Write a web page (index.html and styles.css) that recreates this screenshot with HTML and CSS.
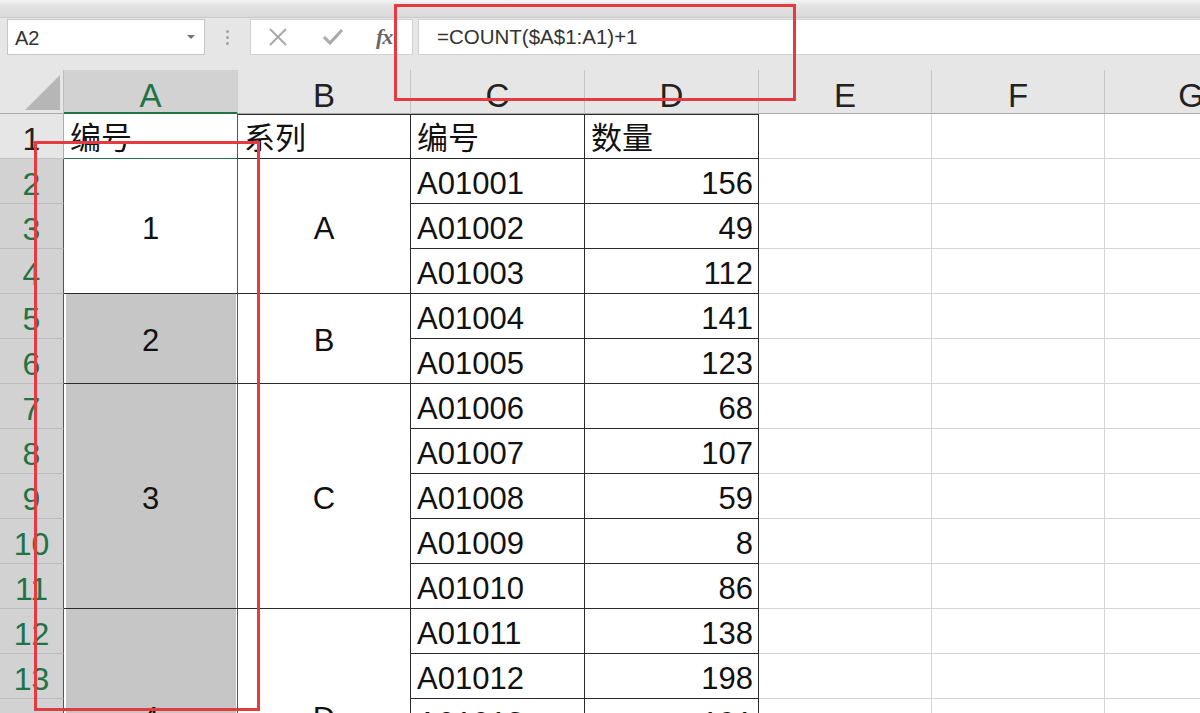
FILE: index.html
```html
<!DOCTYPE html>
<html lang="zh-CN">
<head>
<meta charset="utf-8">
<title>Excel</title>
<link rel="stylesheet" href="styles.css">
</head>
<body>
<div class="app">
  <div class="topstrip"></div>
  <div class="fbar">
    <div class="namebox"><span class="ref">A2</span><span class="dd"></span></div>
    <div class="grip"><span></span><span></span><span></span></div>
    <div class="fnbox">
      <svg class="ico" width="20" height="18" viewBox="0 0 20 18"><path d="M2 1 L18 17 M18 1 L2 17" stroke="#a9a9a9" stroke-width="2" fill="none"/></svg>
      <svg class="ico" width="22" height="18" viewBox="0 0 22 18"><path d="M2 9 L8 15 L20 2" stroke="#a9a9a9" stroke-width="3" fill="none"/></svg>
      <span class="fx">fx</span>
    </div>
    <div class="finput">=COUNT($A$1:A1)+1</div>
  </div>
  <div class="sheet">
    <div class="corner"><span class="tri"></span></div>
    <div class="ch ch-sel">A</div>
    <div class="ch">B</div>
    <div class="ch">C</div>
    <div class="ch">D</div>
    <div class="ch">E</div>
    <div class="ch">F</div>
    <div class="ch">G</div>

    <div class="rh">1</div>
    <div class="c t ca a1 top">编号</div>
    <div class="c t top">系列</div>
    <div class="c t top">编号</div>
    <div class="c t top">数量</div>
    <div class="c"></div><div class="c"></div><div class="c"></div>

    <div class="rh rh-sel">2</div>
    <div class="c t ca sel active m span3">1</div>
    <div class="c t m span3">A</div>
    <div class="c t">A01001</div>
    <div class="c t num">156</div>
    <div class="c"></div><div class="c"></div><div class="c"></div>

    <div class="rh rh-sel">3</div>
    <div class="c t">A01002</div>
    <div class="c t num">49</div>
    <div class="c"></div><div class="c"></div><div class="c"></div>

    <div class="rh rh-sel">4</div>
    <div class="c t">A01003</div>
    <div class="c t num">112</div>
    <div class="c"></div><div class="c"></div><div class="c"></div>

    <div class="rh rh-sel">5</div>
    <div class="c t ca sel m span2">2</div>
    <div class="c t m span2">B</div>
    <div class="c t">A01004</div>
    <div class="c t num">141</div>
    <div class="c"></div><div class="c"></div><div class="c"></div>

    <div class="rh rh-sel">6</div>
    <div class="c t">A01005</div>
    <div class="c t num">123</div>
    <div class="c"></div><div class="c"></div><div class="c"></div>

    <div class="rh rh-sel">7</div>
    <div class="c t ca sel m span5">3</div>
    <div class="c t m span5">C</div>
    <div class="c t">A01006</div>
    <div class="c t num">68</div>
    <div class="c"></div><div class="c"></div><div class="c"></div>

    <div class="rh rh-sel">8</div>
    <div class="c t">A01007</div>
    <div class="c t num">107</div>
    <div class="c"></div><div class="c"></div><div class="c"></div>

    <div class="rh rh-sel">9</div>
    <div class="c t">A01008</div>
    <div class="c t num">59</div>
    <div class="c"></div><div class="c"></div><div class="c"></div>

    <div class="rh rh-sel">10</div>
    <div class="c t">A01009</div>
    <div class="c t num">8</div>
    <div class="c"></div><div class="c"></div><div class="c"></div>

    <div class="rh rh-sel">11</div>
    <div class="c t">A01010</div>
    <div class="c t num">86</div>
    <div class="c"></div><div class="c"></div><div class="c"></div>

    <div class="rh rh-sel">12</div>
    <div class="c t ca sel m span5 last">4</div>
    <div class="c t m span5 last">D</div>
    <div class="c t">A01011</div>
    <div class="c t num">138</div>
    <div class="c"></div><div class="c"></div><div class="c"></div>

    <div class="rh rh-sel">13</div>
    <div class="c t">A01012</div>
    <div class="c t num">198</div>
    <div class="c"></div><div class="c"></div><div class="c"></div>

    <div class="rh rh-sel">14</div>
    <div class="c t">A01013</div>
    <div class="c t num">191</div>
    <div class="c"></div><div class="c"></div><div class="c"></div>

    <div class="rh rh-sel">15</div>
    <div class="c t">A01014</div>
    <div class="c t num">75</div>
    <div class="c"></div><div class="c"></div><div class="c"></div>

    <div class="rh rh-sel">16</div>
    <div class="c t">A01015</div>
    <div class="c t num">120</div>
    <div class="c"></div><div class="c"></div><div class="c"></div>
  </div>
  <div class="mark mark-formula"></div>
  <div class="mark mark-col"></div>
</div>
</body>
</html>
```
FILE: styles.css
```css
html, body {
  margin: 0;
  padding: 0;
  background: #fff;
}
body {
  width: 1200px;
  height: 713px;
  overflow: hidden;
  font-family: "Liberation Sans", "Noto Sans CJK SC", sans-serif;
}
.app {
  position: relative;
  width: 1200px;
  height: 713px;
  overflow: hidden;
  background: #e6e6e6;
}
.topstrip {
  height: 18px;
  box-sizing: border-box;
  background: linear-gradient(#f6f6f6 0px, #e4e4e4 5px, #dadada 16px);
  border-bottom: 1px solid #cbcbcb;
}
.fbar {
  height: 52px;
  display: flex;
  align-items: flex-start;
  padding-top: 1px;
  box-sizing: border-box;
}
.namebox {
  margin-left: 7px;
  width: 198px;
  height: 36px;
  box-sizing: border-box;
  background: #fff;
  border: 1px solid #c6c6c6;
  display: flex;
  align-items: center;
  justify-content: space-between;
  padding: 0 9px 0 7px;
  font-size: 20px;
  color: #333;
}
.ref { padding-top: 2px; }
.dd {
  width: 0;
  height: 0;
  border-left: 4px solid transparent;
  border-right: 4px solid transparent;
  border-top: 4px solid #707070;
}
.grip {
  width: 45px;
  height: 36px;
  display: flex;
  flex-direction: column;
  align-items: center;
  justify-content: center;
  gap: 3px;
}
.grip span {
  width: 3px;
  height: 3px;
  border-radius: 50%;
  background: #a2a2a2;
}
.fnbox {
  width: 163px;
  height: 36px;
  box-sizing: border-box;
  background: #fff;
  border: 1px solid #d2d2d2;
  display: flex;
  align-items: center;
  padding-left: 17px;
}
.ico { display: block; }
.ico:first-child { margin-right: 34px; }
.ico:nth-child(2) { margin-right: 32px; }
.fx {
  font-family: "Liberation Serif", serif;
  font-style: italic;
  font-weight: bold;
  font-size: 22px;
  color: #666;
  letter-spacing: -1px;
}
.finput {
  margin-left: 5px;
  flex: 1;
  height: 36px;
  box-sizing: border-box;
  background: #fff;
  border: 1px solid #d2d2d2;
  border-right: none;
  padding-left: 18px;
  font-size: 20.5px;
  line-height: 34px;
  color: #333;
}
.sheet {
  display: grid;
  grid-template-columns: 64px 174px 173px 174px 174px 173px 173px 173px;
  grid-template-rows: 44px repeat(16, 45px);
  background: #fff;
  width: 1278px;
}
.corner {
  background: #e6e6e6;
  border-right: 1px solid #bdbdbd;
  border-bottom: 1px solid #ababab;
  box-sizing: border-box;
  position: relative;
}
.tri {
  position: absolute;
  left: 25px;
  top: 5px;
  width: 0;
  height: 0;
  border-left: 35px solid transparent;
  border-bottom: 35px solid #b6b6b6;
}
.ch {
  background: #e6e6e6;
  box-sizing: border-box;
  border-right: 1px solid #c4c4c4;
  border-bottom: 1px solid #ababab;
  text-align: center;
  font-size: 33px;
  line-height: 33px;
  padding-top: 9px;
  color: #222;
}
.ch-sel {
  background: #d2d2d2;
  color: #217346;
  border-bottom: 2px solid #217346;
  border-right-color: #d2d2d2;
}
.rh {
  background: #e6e6e6;
  box-sizing: border-box;
  border-right: 1px solid #ababab;
  border-bottom: 1px solid #c4c4c4;
  text-align: center;
  font-size: 32px;
  line-height: 32px;
  padding-top: 9px;
  color: #222;
}
.rh-sel {
  background: #d2d2d2;
  color: #217346;
  border-right-color: #217346;
  border-bottom-color: #bcbcbc;
}
.c {
  box-sizing: border-box;
  border-right: 1px solid #d4d4d4;
  border-bottom: 1px solid #d4d4d4;
  display: flex;
  align-items: flex-end;
  padding: 0 5px 4px 6px;
  font-size: 31px;
  line-height: 31px;
  color: #111;
  white-space: nowrap;
  overflow: hidden;
}
.c.t {
  border-right-color: #2b2b2b;
  border-bottom-color: #2b2b2b;
}
.c.top {
  box-shadow: inset 0 1px 0 #2b2b2b;
}
.c.a1 {
  border-bottom: 1px solid #217346;
  border-right-color: #217346;
  box-shadow: none;
}
.c.num {
  justify-content: flex-end;
}
.c.m {
  align-items: center;
  justify-content: center;
  padding: 4px 0 0 0;
}
.c.m.last {
  padding: 0 0 6px 0;
}
.c.sel {
  background: #c6c6c6;
  border-right-color: #217346;
  box-shadow: inset 2px 0 0 #fff, inset -1px 0 0 #fff;
}
.c.sel.active {
  background: #fff;
}
.span2 { grid-row: span 2; }
.span3 { grid-row: span 3; }
.span5 { grid-row: span 5; }
.mark {
  position: absolute;
  border: 3px solid #e53b40;
  box-sizing: border-box;
  pointer-events: none;
}
.mark-formula {
  left: 394px;
  top: 4px;
  width: 402px;
  height: 97px;
}
.mark-col {
  left: 34px;
  top: 141px;
  width: 226px;
  height: 570px;
}
```
